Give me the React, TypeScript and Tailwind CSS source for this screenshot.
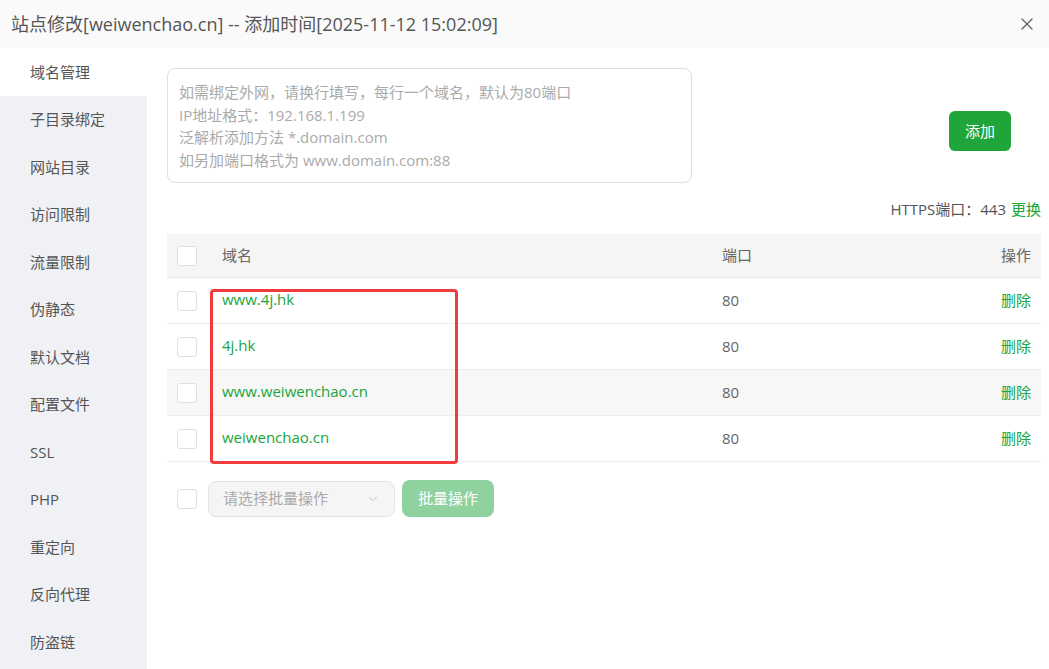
import { X, ChevronDown } from 'lucide-react';

const menu = ['域名管理', '子目录绑定', '网站目录', '访问限制', '流量限制', '伪静态', '默认文档', '配置文件', 'SSL', 'PHP', '重定向', '反向代理', '防盗链'];

const domains = [
  { name: 'www.4j.hk', port: 80 },
  { name: '4j.hk', port: 80 },
  { name: 'www.weiwenchao.cn', port: 80, hover: true },
  { name: 'weiwenchao.cn', port: 80 },
];

function Box() {
  return <span className="block w-[20px] h-[20px] rounded-[3px] border border-[#dcdfe6] bg-white" />;
}

export default function App() {
  return (
    <div
      className="w-[1049px] h-[669px] overflow-hidden bg-white text-[15px] text-[#666]"
      style={{ fontFamily: '"Open Sans", "Noto Sans CJK SC", sans-serif' }}
    >
      {/* Header */}
      <div className="h-[48px] bg-[#fafafa] flex items-center justify-between pl-[11px] pr-[12px]">
        <span className="text-[18px] text-[#555]">站点修改[weiwenchao.cn] -- 添加时间[2025-11-12 15:02:09]</span>
        <X className="w-[20px] h-[20px] text-[#666]" strokeWidth={1.6} />
      </div>

      <div className="flex h-[621px]">
        {/* Sidebar */}
        <div className="w-[147px] bg-[#f0f1f5] flex flex-col">
          {menu.map((m, i) => (
            <div
              key={m}
              className={`h-[47.5px] shrink-0 flex items-center pl-[30px] text-[15px] text-[#555] ${i === 0 ? 'bg-white' : ''}`}
            >
              {m}
            </div>
          ))}
        </div>

        {/* Content */}
        <div className="flex-1 pl-[20px] pr-[8px] pt-[20px]">
          <div className="flex items-start">
            <div className="w-[525px] h-[115px] rounded-[8px] border border-[#dcdfe6] px-[11px] pt-[12px] leading-[22.5px] text-[#aaa]">
              <div>如需绑定外网，请换行填写，每行一个域名，默认为80端口</div>
              <div>IP地址格式：192.168.1.199</div>
              <div>泛解析添加方法 *.domain.com</div>
              <div>如另加端口格式为 www.domain.com:88</div>
            </div>
            <button className="ml-[257px] mt-[43px] w-[62px] h-[40px] rounded-[6px] bg-[#20a53a] text-white">添加</button>
          </div>

          <div className="flex justify-end mt-[15px] h-[22px] items-center text-[#555]">
            HTTPS端口：443<span className="ml-[5px] text-[#20a53a]">更换</span>
          </div>

          {/* Table */}
          <div className="relative mt-[14px]">
            <div className="h-[44px] bg-[#f5f5f5] border-b border-[#e8e8e8] flex items-center text-[#666]">
              <div className="w-[55px] pl-[10px]"><Box /></div>
              <div className="w-[500px]">域名</div>
              <div className="flex-1">端口</div>
              <div className="pr-[10px]">操作</div>
            </div>
            {domains.map((d) => (
              <div
                key={d.name}
                className={`h-[46px] border-b border-[#eee] flex items-center ${d.hover ? 'bg-[#f7f7f7]' : 'bg-white'}`}
              >
                <div className="w-[55px] pl-[10px]"><Box /></div>
                <div className="w-[500px] text-[#20a53a] -mt-[3px]">{d.name}</div>
                <div className="flex-1 text-[#666]">{d.port}</div>
                <div className="pr-[10px] text-[#20a53a]">删除</div>
              </div>
            ))}
            {/* highlight box */}
            <div className="absolute left-[43px] top-[55px] w-[248px] h-[175px] border-[3px] border-[#f03c3c] rounded-[4px] pointer-events-none" />
          </div>

          {/* Batch */}
          <div className="flex items-center mt-[18px]">
            <div className="pl-[10px] w-[41px]"><Box /></div>
            <div className="w-[187px] h-[36px] rounded-[8px] border border-[#e4e4e4] bg-[#f5f5f5] flex items-center justify-between pl-[14px] pr-[14px] text-[#aaa]">
              <span>请选择批量操作</span>
              <ChevronDown className="w-[14px] h-[14px] text-[#bbb]" strokeWidth={1.5} />
            </div>
            <button className="ml-[7px] w-[92px] h-[37px] rounded-[8px] bg-[#8fd19f] text-white">批量操作</button>
          </div>
        </div>
      </div>
    </div>
  );
}
